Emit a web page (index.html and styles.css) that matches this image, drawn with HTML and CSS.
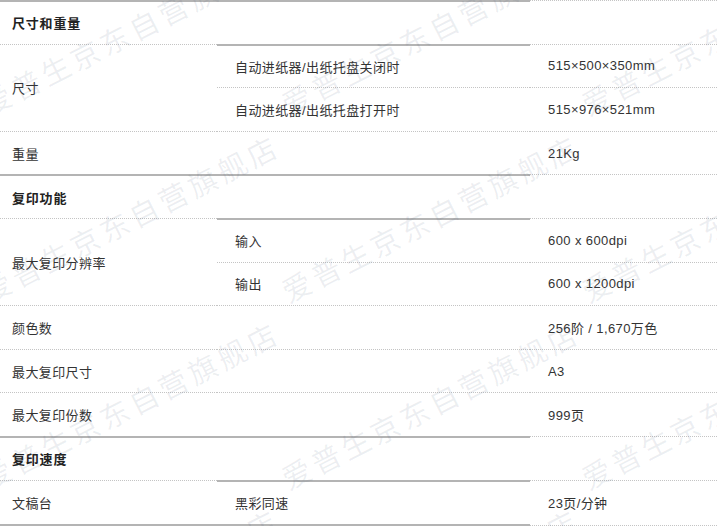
FILE: index.html
```html
<!DOCTYPE html>
<html lang="zh-CN">
<head>
    <meta charset="UTF-8">
    <meta name="viewport" content="width=device-width, initial-scale=1.0">
    <title>规格参数</title>
    <link rel="stylesheet" href="styles.css">
</head>
<body>
    <div class="page">
        <table class="spec">
            <colgroup>
                <col class="col-name">
                <col class="col-sub">
                <col class="col-value">
            </colgroup>
            <tbody>
                <tr class="group"><th colspan="2">尺寸和重量</th><td></td></tr>
                <tr class="first"><td class="name" rowspan="2">尺寸</td><td class="sub">自动进纸器/出纸托盘关闭时</td><td>515×500×350mm</td></tr>
                <tr><td class="sub">自动进纸器/出纸托盘打开时</td><td>515×976×521mm</td></tr>
                <tr><td class="name">重量</td><td class="sub"></td><td>21Kg</td></tr>

                <tr class="group"><th colspan="2">复印功能</th><td></td></tr>
                <tr class="first"><td class="name" rowspan="2">最大复印分辨率</td><td class="sub">输入</td><td>600 x 600dpi</td></tr>
                <tr><td class="sub">输出</td><td>600 x 1200dpi</td></tr>
                <tr><td class="name">颜色数</td><td class="sub"></td><td>256阶 / 1,670万色</td></tr>
                <tr><td class="name">最大复印尺寸</td><td class="sub"></td><td>A3</td></tr>
                <tr><td class="name">最大复印份数</td><td class="sub"></td><td>999页</td></tr>

                <tr class="group"><th colspan="2">复印速度</th><td></td></tr>
                <tr class="first end"><td class="name">文稿台</td><td class="sub">黑彩同速</td><td>23页/分钟</td></tr>
            </tbody>
        </table>

        <!-- shop watermark tiled over the table -->
        <div class="watermark">
            <span>爱普生京东自营旗舰店</span><span>爱普生京东自营旗舰店</span><span>爱普生京东自营旗舰店</span>
            <span>爱普生京东自营旗舰店</span><span>爱普生京东自营旗舰店</span><span>爱普生京东自营旗舰店</span>
            <span>爱普生京东自营旗舰店</span><span>爱普生京东自营旗舰店</span><span>爱普生京东自营旗舰店</span>
            <span>爱普生京东自营旗舰店</span><span>爱普生京东自营旗舰店</span><span>爱普生京东自营旗舰店</span>
        </div>
    </div>
</body>
</html>
```

FILE: styles.css
```css
body {
    margin: 0;
    background: #fff;
    font-family: "Liberation Sans", "Noto Sans CJK SC", sans-serif;
    font-size: 13px;
    letter-spacing: 0.4px;
    color: #333;
}
.page {
    position: relative;
    width: 717px;
    height: 526px;
    overflow: hidden;
}
.spec {
    width: 717px;
    table-layout: fixed;
    border-collapse: separate;
    border-spacing: 0;
}
.col-name {
    width: 217px;
}
.col-sub {
    width: 313px;
}
.col-value {
    width: 187px;
}
.spec tr {
    height: 43.6px;
}
.spec th, .spec td {
    padding: 0 0 0 18px;
    text-align: left;
    vertical-align: middle;
    border-top: 1px dotted #c4c4c4;
    white-space: nowrap;
}
.spec th, .spec td.name {
    padding-left: 12px;
}
.spec th {
    font-weight: bold;
    color: #222;
    letter-spacing: 0.8px;
}
.spec .group th {
    border-top: 2px solid #b4b4b4;
}
.spec .first td.sub {
    border-top: 2px solid #b4b4b4;
}
.spec tr.end {
    height: 46px;
}
.spec .end td {
    border-bottom: 1px dotted #c4c4c4;
}
.spec .end td.name,
.spec .end td.sub {
    border-bottom: 2px solid #b4b4b4;
}

/* Watermark */
.watermark {
    position: absolute;
    left: -17px;
    top: 91px;
    display: grid;
    grid-template-columns: repeat(3, 300px);
    grid-auto-rows: 187px;
    pointer-events: none;
}
.watermark span {
    display: block;
    height: 28px;
    line-height: 28px;
    font-family: "Noto Sans CJK SC", sans-serif;
    font-size: 29px;
    letter-spacing: 4px;
    white-space: nowrap;
    color: rgba(60, 75, 110, 0.09);
    transform-origin: 0 50%;
    transform: rotate(-27deg);
}
```
